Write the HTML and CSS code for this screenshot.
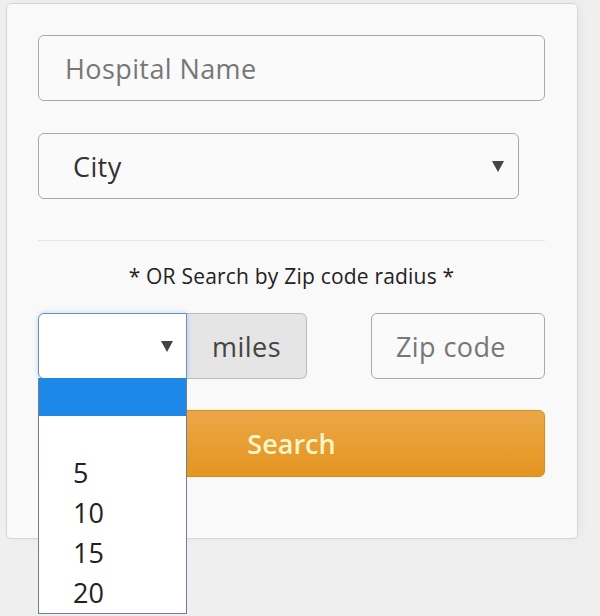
FILE: index.html
```html
<!DOCTYPE html>
<html>
<head>
<meta charset="utf-8">
<link rel="stylesheet" href="styles.css">
</head>
<body>
<div class="panel">
  <div class="field field-wide placeholder">Hospital Name</div>
  <div class="field field-select">
    <span class="value">City</span>
    <svg class="caret" width="12" height="11" viewBox="0 0 12 11"><path d="M0 0H12L6 11Z" fill="#444"/></svg>
  </div>
  <hr class="divider">
  <p class="or-text">* OR Search by Zip code radius *</p>
  <div class="zip-row">
    <div class="group">
      <div class="miles-select">
        <svg class="caret" width="12" height="11" viewBox="0 0 12 11"><path d="M0 0H12L6 11Z" fill="#444"/></svg>
        <div class="dropdown">
          <div class="opt opt-active"></div>
          <div class="opt-blank"></div>
          <div class="opt">5</div>
          <div class="opt">10</div>
          <div class="opt">15</div>
          <div class="opt">20</div>
        </div>
      </div>
      <div class="addon">miles</div>
    </div>
    <div class="field zip placeholder">Zip code</div>
  </div>
  <div class="search-btn">Search</div>
</div>
</body>
</html>
```
FILE: styles.css
```css
* { box-sizing: border-box; }
html, body { margin: 0; padding: 0; }
body {
  background: #efefef;
  font-family: "Open Sans", "Noto Sans", sans-serif;
  width: 600px;
  height: 616px;
  overflow: hidden;
}
.panel {
  position: relative;
  margin: 3px 0 0 6px;
  width: 572px;
  height: 536px;
  background: #f9f9f9;
  border: 1px solid #d6d6d6;
  border-radius: 5px;
  padding: 31px 32px 0 31px;
  box-shadow: 3px 0 8px rgba(0,0,0,0.04);
}
.field {
  height: 66px;
  border: 1px solid #a9a9a9;
  border-radius: 6px;
  background: #fafafa;
  font-size: 27px;
  letter-spacing: 0.4px;
  display: flex;
  align-items: center;
  padding-left: 26px;
  color: #333;
}
.placeholder { color: #777; }
.field-wide { width: 507px; }
.field-select {
  width: 481px;
  margin-top: 32px;
  padding-left: 34px;
  padding-right: 14px;
  justify-content: space-between;
}
.field-select .value { color: #333; }
.caret { display: block; }
.divider {
  border: 0;
  border-top: 1px solid #e6e6e6;
  margin: 41px 0 0 0;
  width: 507px;
}
.or-text {
  margin: 20px 0 0 0;
  text-align: center;
  font-size: 21px;
  letter-spacing: 0.2px;
  line-height: 30px;
  color: #222;
  width: 507px;
}
.zip-row {
  margin-top: 22px;
  width: 507px;
  display: flex;
  justify-content: space-between;
}
.group { display: flex; }
.miles-select {
  position: relative;
  width: 149px;
  height: 66px;
  background: #fff;
  border: 1px solid #6d8fb5;
  border-radius: 6px 0 0 6px;
  box-shadow: 0 0 5px rgba(102,175,233,0.45);
  display: flex;
  align-items: center;
  justify-content: flex-end;
  padding-right: 13px;
  z-index: 2;
}
.addon {
  width: 120px;
  height: 66px;
  background: #e5e5e5;
  border: 1px solid #bcbcbc;
  border-left: 0;
  border-radius: 0 6px 6px 0;
  display: flex;
  align-items: center;
  justify-content: center;
  font-size: 27px;
  letter-spacing: 0.5px;
  color: #444;
}
.zip {
  width: 174px;
  padding-left: 24px;
}
.search-btn {
  margin-top: 31px;
  width: 507px;
  height: 67px;
  border: 1px solid #c79035;
  border-radius: 6px;
  background: linear-gradient(#eba747, #e4951f);
  color: #fff6c6;
  font-size: 27px;
  font-weight: 600;
  display: flex;
  align-items: center;
  justify-content: center;
  box-shadow: 0 0 3px rgba(255,230,140,0.6);
}
.dropdown {
  position: absolute;
  left: -1px;
  top: 100%;
  width: 149px;
  background: #fff;
  border: 1px solid #6f7f93;
  border-top: 0;
  z-index: 5;
}
.opt {
  height: 40px;
  font-size: 27px;
  line-height: 40px;
  padding-left: 34px;
  color: #222;
}
.opt-active {
  height: 38px;
  background: #1e88e8;
}
.opt-blank { height: 37px; }
```
